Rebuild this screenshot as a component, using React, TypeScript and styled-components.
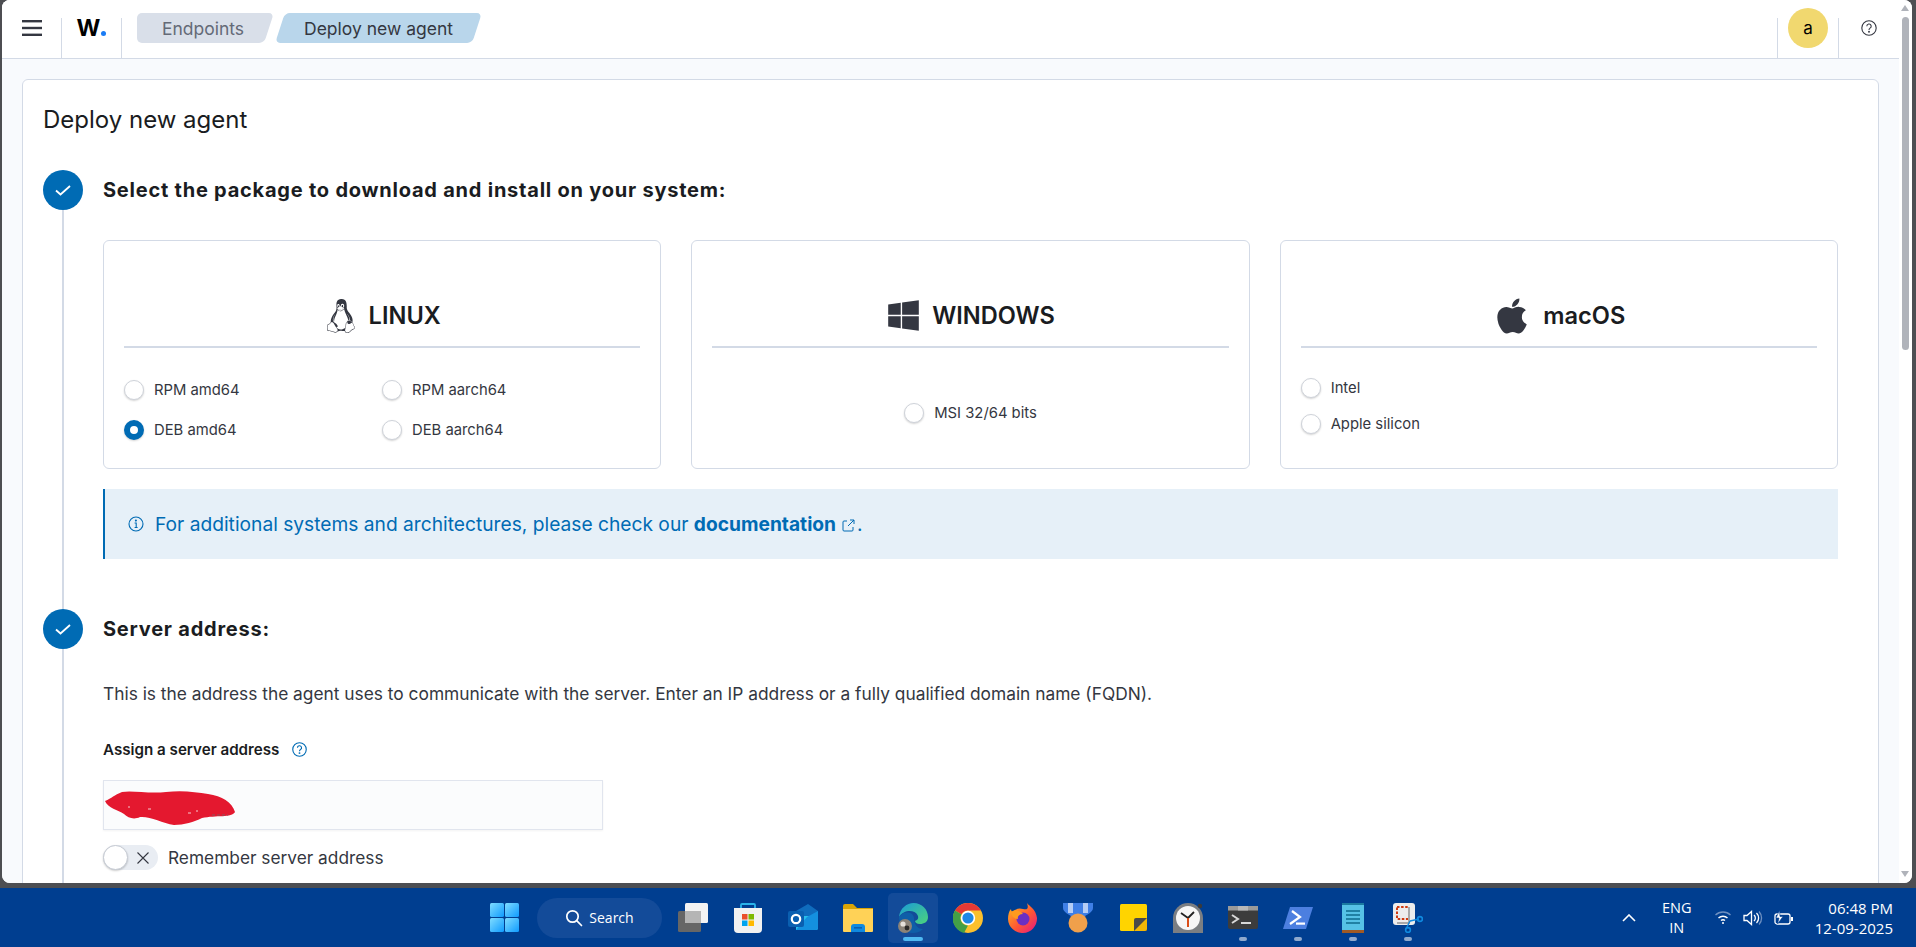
import React from 'react';
import styled, { createGlobalStyle } from 'styled-components';
import { FaWindows, FaApple } from 'react-icons/fa';
import { SiLinux } from 'react-icons/si';

const GlobalStyle = createGlobalStyle`
  html, body {
    margin: 0;
    height: 100%;
    overflow: hidden;
    background: #4d4e52;
  }
  * { box-sizing: border-box; }
`;

const Screen = styled.div`
  width: 1916px;
  height: 947px;
  display: flex;
  flex-direction: column;
  font-family: Inter, "Liberation Sans", sans-serif;
  color: #343741;
  background: #4d4e52;
  overflow: hidden;
`;

const Desktop = styled.div`
  height: 888px;
  padding: 0 4px 5px 2px;
`;

const BrowserWindow = styled.div`
  height: 883px;
  display: flex;
  background: #fff;
  border-radius: 8px;
  overflow: hidden;
`;

const Viewport = styled.div`
  flex: 1;
  min-width: 0;
  display: flex;
  flex-direction: column;
  background: #f8fafd;
`;

const ScrollTrack = styled.div`
  width: 13px;
  display: flex;
  flex-direction: column;
  align-items: flex-start;
  background: #fff;
  padding: 5px 0 6px 2px;
`;

const ScrollArrow = styled.div<{ $down?: boolean }>`
  width: 0;
  height: 0;
  margin-top: ${(p) => (p.$down ? 'auto' : '0')};
  border-left: 4.5px solid transparent;
  border-right: 4.5px solid transparent;
  border-bottom: ${(p) => (p.$down ? 'none' : '6px solid #b0b3ba')};
  border-top: ${(p) => (p.$down ? '6px solid #b0b3ba' : 'none')};
`;

const ScrollThumb = styled.div`
  width: 7px;
  height: 333px;
  margin: 6px 0 0 1px;
  border-radius: 4px;
  background: #b0b3ba;
`;

const Header = styled.header`
  height: 59px;
  flex: none;
  display: flex;
  background: #fff;
  border-bottom: 1px solid #d3dae6;
`;

const HeaderCell = styled.div<{ $width: number; $divider?: boolean }>`
  width: ${(p) => p.$width}px;
  height: 40px;
  margin-top: 18px;
  flex: none;
  display: flex;
  justify-content: center;
  border-right: ${(p) => (p.$divider ? '1px solid #d3dae6' : 'none')};
`;

const Hamburger = styled.svg`
  margin-top: 2px;
`;

const LogoMark = styled.div`
  margin-top: -5px;
  font-size: 23px;
  line-height: 30px;
  font-weight: 700;
  color: #000;
`;

const LogoDot = styled.span`
  display: inline-block;
  width: 5px;
  height: 5px;
  margin-left: 1px;
  border-radius: 50%;
  background: #1a7cf5;
`;

const Crumbs = styled.nav`
  display: flex;
  gap: 11px;
  margin: 13px 0 0 15px;
  height: 30px;
`;

const Crumb = styled.div<{ $first?: boolean; $width: number }>`
  position: relative;
  width: ${(p) => p.$width}px;
  height: 30px;
  display: flex;
  align-items: center;
  justify-content: center;
  font-size: 17.5px;
  color: ${(p) => (p.$first ? '#646a77' : '#343741')};
  &::before {
    content: '';
    position: absolute;
    top: 0;
    bottom: 0;
    left: ${(p) => (p.$first ? '10px' : '0')};
    right: 0;
    border-radius: 5px;
    transform: skewX(-18deg);
    background: ${(p) => (p.$first ? '#d9dfe9' : '#b9d6eb')};
  }
  &::after {
    content: '';
    display: ${(p) => (p.$first ? 'block' : 'none')};
    position: absolute;
    top: 0;
    bottom: 0;
    left: 0;
    width: 60px;
    border-radius: 5px;
    background: #d9dfe9;
  }
`;

const CrumbLabel = styled.span`
  position: relative;
  z-index: 1;
`;

const HeaderSpacer = styled.div`
  flex: 1;
`;

const Avatar = styled.div`
  width: 40px;
  height: 40px;
  margin-top: -10px;
  border-radius: 50%;
  background: #f1d86f;
  color: #000;
  font-size: 17px;
  display: flex;
  align-items: center;
  justify-content: center;
`;

const HelpIcon = styled.svg`
  margin-top: 2px;
`;

const Main = styled.main`
  flex: 1;
  min-height: 0;
  overflow: hidden;
  padding: 20px 20px 0;
`;

const Panel = styled.section`
  background: #fff;
  border: 1px solid #d3dae6;
  border-radius: 6px;
  padding: 22px 40px 0 20px;
  min-height: 900px;
`;

const PageTitle = styled.h1`
  margin: 0 0 32px;
  font-size: 24px;
  line-height: 36px;
  font-weight: 400;
  color: #1a1c21;
`;

const StepHead = styled.div`
  display: flex;
  align-items: center;
  gap: 20px;
  height: 40px;
`;

const StepCircle = styled.div`
  width: 40px;
  height: 40px;
  border-radius: 50%;
  background: #006bb4;
  display: flex;
  align-items: center;
  justify-content: center;
  flex: none;
`;

const StepTitle = styled.h2`
  margin: 0;
  font-size: 20px;
  line-height: 28px;
  font-weight: 700;
  letter-spacing: 0.77px;
  color: #1a1c21;
`;

const StepBody = styled.div<{ $top: number; $bottom: number }>`
  margin-left: 19px;
  padding: ${(p) => p.$top}px 0 ${(p) => p.$bottom}px 39px;
  border-left: 2px solid #d3dae6;
`;

const CardGrid = styled.div`
  display: grid;
  grid-template-columns: repeat(3, 1fr);
  gap: 30px;
`;

const Card = styled.div`
  height: 229px;
  padding: 0 20px;
  background: #fff;
  border: 1px solid #d3dae6;
  border-radius: 6px;
`;

const CardHead = styled.div`
  height: 107px;
  display: flex;
  align-items: center;
  justify-content: center;
  gap: 11px;
  padding-top: 44px;
  border-bottom: 2px solid #d3dae6;
  font-size: 23.6px;
  font-weight: 600;
  color: #1a1c21;
  svg {
    color: #343741;
    flex: none;
  }
`;

const Options = styled.div<{ $top: number; $gap: number; $columns?: string; $center?: boolean }>`
  display: grid;
  grid-template-columns: ${(p) => p.$columns ?? '1fr'};
  row-gap: ${(p) => p.$gap}px;
  padding-top: ${(p) => p.$top}px;
  justify-items: ${(p) => (p.$center ? 'center' : 'start')};
`;

const Option = styled.label`
  display: flex;
  align-items: center;
  gap: 10px;
  height: 20px;
  font-size: 14.8px;
  color: #343741;
`;

const Radio = styled.span<{ $checked?: boolean }>`
  width: 20px;
  height: 20px;
  border-radius: 50%;
  flex: none;
  background: #fff;
  border: ${(p) => (p.$checked ? '6px solid #006bb4' : '1px solid #cfd3da')};
  box-shadow: 0 1px 2px rgba(0, 0, 0, 0.18);
`;

const Callout = styled.div`
  margin-top: 20px;
  height: 70px;
  display: flex;
  align-items: center;
  gap: 11px;
  padding-left: 23px;
  border-left: 2px solid #006bb4;
  background: #e6f0f8;
  color: #006bb4;
  font-size: 19.2px;
`;

const DocLink = styled.a`
  font-weight: 700;
  color: #006bb4;
`;

const ExternalIcon = styled.svg`
  margin: 0 2px 0 6px;
  vertical-align: -1px;
`;

const Paragraph = styled.p`
  margin: 0 0 33px;
  font-size: 17.33px;
  line-height: 24px;
  color: #343741;
`;

const FieldLabel = styled.div`
  display: flex;
  align-items: center;
  gap: 13px;
  height: 20px;
  margin-bottom: 21px;
  font-size: 15.15px;
  font-weight: 600;
  color: #1a1c21;
`;

const AddressInput = styled.div`
  position: relative;
  width: 500px;
  height: 50px;
  background: #fbfcfd;
  border: 1px solid #e1e5ee;
  box-shadow: 0 1px 2px rgba(0, 0, 0, 0.05);
`;

const Scribble = styled.svg`
  position: absolute;
  left: 0;
  top: 9px;
`;

const ToggleRow = styled.div`
  display: flex;
  align-items: center;
  gap: 10px;
  margin-top: 15px;
  font-size: 17.3px;
  color: #343741;
`;

const Toggle = styled.div`
  width: 55px;
  height: 25px;
  display: flex;
  align-items: center;
  justify-content: space-between;
  padding-right: 8px;
  border-radius: 13px;
  background: #e9edf3;
`;

const ToggleKnob = styled.span`
  width: 25px;
  height: 25px;
  border-radius: 50%;
  background: #fff;
  border: 1px solid #c5cad3;
  box-shadow: 0 1px 2px rgba(0, 0, 0, 0.2);
`;

const Taskbar = styled.footer`
  height: 59px;
  flex: none;
  position: relative;
  display: flex;
  align-items: center;
  justify-content: flex-end;
  background: #003e90;
  color: #fff;
  font-family: "Open Sans", "Noto Sans", sans-serif;
`;

const TaskbarCenter = styled.div`
  position: absolute;
  left: 489px;
  top: 0;
  height: 59px;
  display: flex;
  align-items: center;
`;

const TaskSlot = styled.div<{ $active?: boolean; $open?: boolean }>`
  position: relative;
  width: 50px;
  height: 50px;
  margin-right: 5px;
  display: flex;
  align-items: center;
  justify-content: center;
  border-radius: 5px;
  background: ${(p) => (p.$active ? '#134b99' : 'transparent')};
  &::after {
    content: '';
    display: ${(p) => (p.$open || p.$active ? 'block' : 'none')};
    position: absolute;
    left: 50%;
    bottom: 2px;
    width: ${(p) => (p.$active ? '20px' : '8px')};
    height: 4px;
    margin-left: ${(p) => (p.$active ? '-10px' : '-4px')};
    border-radius: 2px;
    background: ${(p) => (p.$active ? '#4fb9f2' : '#8fa9cd')};
  }
`;

const SearchPill = styled.div`
  width: 125px;
  height: 40px;
  margin: 0 6px 0 18px;
  display: flex;
  align-items: center;
  justify-content: center;
  gap: 6px;
  border-radius: 20px;
  background: #134b99;
  font-size: 14px;
`;

const StartSlot = styled.div`
  width: 30px;
  display: flex;
  justify-content: center;
`;

const Tray = styled.div`
  display: flex;
  align-items: center;
  padding-right: 23px;
`;

const TrayLang = styled.div`
  width: 40px;
  margin: 0 17px 0 21px;
  text-align: center;
  font-size: 14.5px;
  line-height: 20px;
`;

const TrayIcons = styled.div`
  display: flex;
  align-items: center;
  gap: 11px;
  margin-right: 21px;
`;

const Clock = styled.div`
  text-align: right;
  font-size: 15px;
  line-height: 20px;
`;

const StartIcon = () => (
  <svg width="29" height="29" viewBox="0 0 29 29">
    <defs>
      <linearGradient id="startFill" x1="0" y1="0" x2="1" y2="1">
        <stop offset="0" stopColor="#7fdcff" />
        <stop offset="1" stopColor="#0f9bff" />
      </linearGradient>
    </defs>
    <rect x="0" y="0" width="14" height="14" rx="1.5" fill="url(#startFill)" />
    <rect x="15" y="0" width="14" height="14" rx="1.5" fill="url(#startFill)" />
    <rect x="0" y="15" width="14" height="14" rx="1.5" fill="url(#startFill)" />
    <rect x="15" y="15" width="14" height="14" rx="1.5" fill="url(#startFill)" />
  </svg>
);

const SearchIcon = () => (
  <svg width="18" height="18" viewBox="0 0 18 18" fill="none" stroke="#fff" strokeWidth="1.7">
    <circle cx="7.5" cy="7.5" r="5.7" />
    <path d="M11.7 11.7 L16.5 16.5" strokeLinecap="round" />
  </svg>
);

const TaskViewIcon = () => (
  <svg width="30" height="30" viewBox="0 0 30 30">
    <rect x="0" y="8" width="23" height="21" rx="1.5" fill="#666" />
    <rect x="7" y="0" width="23" height="20" rx="1.5" fill="#f3f3f3" />
    <rect x="7" y="8" width="16" height="12" fill="#b5b5b5" />
  </svg>
);

const StoreIcon = () => (
  <svg width="30" height="30" viewBox="0 0 30 30">
    <path d="M8 6 V2 a1 1 0 0 1 1-1 h12 a1 1 0 0 1 1 1 v4" fill="none" stroke="#2ab4ea" strokeWidth="1.8" />
    <path d="M1 5 h28 v21 a4 4 0 0 1-4 4 h-20 a4 4 0 0 1-4-4 z" fill="#f1f1f1" />
    <rect x="9" y="11" width="5.5" height="5.5" fill="#ea4f2a" />
    <rect x="15.5" y="11" width="5.5" height="5.5" fill="#7fb900" />
    <rect x="9" y="17.5" width="5.5" height="5.5" fill="#00a3ee" />
    <rect x="15.5" y="17.5" width="5.5" height="5.5" fill="#ffb900" />
  </svg>
);

const OutlookIcon = () => (
  <svg width="30" height="30" viewBox="0 0 30 30">
    <path d="M8 8 L20 1 L30 8 V13 H8 z" fill="#0f6cbd" />
    <path d="M8 13 H30 V25 a2 2 0 0 1-2 2 H8 z" fill="#27c0ec" />
    <path d="M8 27 L19 14 L30 8 V25 a2 2 0 0 1-2 2 z" fill="#1490df" />
    <rect x="0" y="8" width="16" height="16" rx="2" fill="#0a5fb0" />
    <circle cx="8" cy="16" r="4.2" fill="none" stroke="#fff" strokeWidth="2.2" />
  </svg>
);

const ExplorerIcon = () => (
  <svg width="30" height="28" viewBox="0 0 30 28">
    <path d="M0 2 a2 2 0 0 1 2-2 h8 l4 4 h16 v8 H0 z" fill="#d9a406" />
    <path d="M0 5 h30 v22 a1 1 0 0 1-1 1 H1 a1 1 0 0 1-1-1 z" fill="#ffd257" />
    <path d="M8 28 v-5 a3 3 0 0 1 3-3 h8 a3 3 0 0 1 3 3 v5 z" fill="#0f8ae0" />
    <rect x="11" y="23" width="8" height="1.6" fill="#0a5fb0" />
  </svg>
);

const EdgeIcon = () => (
  <svg width="30" height="30" viewBox="0 0 30 30">
    <defs>
      <linearGradient id="edgeTop" x1="0" y1="0" x2="1" y2="1">
        <stop offset="0" stopColor="#1a9bd8" />
        <stop offset="1" stopColor="#4cd37c" />
      </linearGradient>
    </defs>
    <path d="M1 14 C2 5 9 0 15.5 0 C24 0 30 6.5 30 14 C30 19 26 21 22 21 C18.5 21 17 19.5 17 18 C20 17 21 15 19.5 12 C17 7 6 6 1 14 z" fill="url(#edgeTop)" />
    <path d="M1 14 C5 8 15 8 16 15 C16 21 19 26 25 26 C22 29 18 30 15 30 C7 30 1 23 1 14 z" fill="#0f5ea8" />
    <circle cx="7" cy="23" r="7" fill="#8b8378" />
    <circle cx="5" cy="21" r="2.6" fill="#e6e1da" />
    <circle cx="9" cy="25" r="2.4" fill="#2c2a28" />
  </svg>
);

const ChromeIcon = () => (
  <svg width="30" height="30" viewBox="0 0 30 30">
    <circle cx="15" cy="15" r="15" fill="#fbc02d" />
    <path d="M15 0 A15 15 0 0 1 28 7.5 H15 A7.5 7.5 0 0 0 8.5 11.2 L2 7.5 A15 15 0 0 1 15 0 z" fill="#e53935" />
    <path d="M2 7.5 L8.5 11.2 A7.5 7.5 0 0 0 15 22.5 L11 30 A15 15 0 0 1 2 7.5 z" fill="#43a047" />
    <circle cx="15" cy="15" r="7.2" fill="#fff" />
    <circle cx="15" cy="15" r="5.6" fill="#1e88e5" />
  </svg>
);

const FirefoxIcon = () => (
  <svg width="30" height="30" viewBox="0 0 30 30">
    <defs>
      <linearGradient id="foxFill" x1="0" y1="0" x2="1" y2="1">
        <stop offset="0" stopColor="#ffbd1f" />
        <stop offset="0.55" stopColor="#ff5634" />
        <stop offset="1" stopColor="#e31587" />
      </linearGradient>
    </defs>
    <path d="M19 0 C21 3 28 6 29 15 A14.5 14.5 0 0 1 0 16 C0 12 1 8 3 6 C3 8 4 9 5 9 C8 5 12 5 15 6 C19 7 21 6 19 0 z" fill="url(#foxFill)" />
    <circle cx="15" cy="16" r="6.5" fill="#6a2fc2" />
    <path d="M3 9 C8 5 13 9 15 11 C11 11 9 14 10 16 C6 16 3 13 3 9 z" fill="#ff9a1f" />
  </svg>
);

const MedalIcon = () => (
  <svg width="30" height="30" viewBox="0 0 30 30">
    <path d="M0 0 H30 V5 C30 9 24 12 20 14 H10 C6 12 0 9 0 5 z" fill="#3f7fe6" />
    <rect x="5" y="0" width="5" height="10" fill="#b5cdf5" />
    <rect x="20" y="0" width="5" height="10" fill="#b5cdf5" />
    <circle cx="15" cy="20" r="9.5" fill="#f0a04b" />
  </svg>
);

const StickyIcon = () => (
  <svg width="27" height="27" viewBox="0 0 27 27">
    <rect x="0" y="0" width="27" height="27" rx="1.5" fill="#ffd400" />
    <path d="M14 27 V16 a2 2 0 0 1 2-2 H27 V27 z" fill="#4a4a48" />
    <path d="M14 27 L27 14 V25 a2 2 0 0 1-2 2 z" fill="#f2b705" />
  </svg>
);

const ClockIcon = () => (
  <svg width="30" height="30" viewBox="0 0 30 30">
    <path d="M0 15 A15 15 0 0 1 30 15 V30 H0 z" fill="#7b7e82" />
    <circle cx="15" cy="15" r="12" fill="#f6f6f6" />
    <path d="M15 15 L8 10 M15 15 L21 9" stroke="#222" strokeWidth="1.8" />
    <path d="M15 15 V24" stroke="#d83b01" strokeWidth="1.8" />
    <circle cx="27" cy="3" r="2.2" fill="#3a3a3a" />
  </svg>
);

const TerminalIcon = () => (
  <svg width="30" height="23" viewBox="0 0 30 23">
    <rect x="0" y="0" width="30" height="23" rx="2" fill="#3c3c3c" />
    <rect x="0" y="0" width="30" height="4.5" fill="#9a9a9a" />
    <rect x="10" y="0" width="10" height="4.5" fill="#b8b8b8" />
    <path d="M4 9 L10 13 L4 17" fill="none" stroke="#d8d8d8" strokeWidth="2" />
    <rect x="13" y="16" width="10" height="2" fill="#d8d8d8" />
  </svg>
);

const PowerShellIcon = () => (
  <svg width="30" height="22" viewBox="0 0 30 22">
    <path d="M7 0 H30 L23 22 H0 z" fill="#4c7fe0" />
    <path d="M9 4 L17 10 L7 17" fill="none" stroke="#fff" strokeWidth="2.2" />
    <rect x="13" y="15.5" width="9" height="2.2" fill="#fff" />
  </svg>
);

const NotepadIcon = () => (
  <svg width="22" height="30" viewBox="0 0 22 30">
    <rect x="0" y="1" width="22" height="29" rx="1" fill="#56c2e6" />
    <rect x="0" y="27" width="22" height="3" fill="#a05a24" />
    <rect x="0" y="0" width="22" height="2" fill="#1a7aa0" />
    <path d="M4 8 H18 M4 12 H18 M4 16 H18 M4 20 H18" stroke="#0f6c8f" strokeWidth="1.6" />
  </svg>
);

const SnipIcon = () => (
  <svg width="30" height="30" viewBox="0 0 30 30">
    <rect x="0" y="0" width="22" height="22" rx="3" fill="#ededed" />
    <rect x="4" y="4" width="12" height="12" fill="none" stroke="#cf3a12" strokeWidth="2" strokeDasharray="2.5 1.6" />
    <path d="M16 4 V20 H4" fill="none" stroke="#a9a9a9" strokeWidth="2" />
    <path d="M17 18 L13 26 M17 18 L26 16" stroke="#0f8ae0" strokeWidth="1.4" />
    <circle cx="15" cy="27" r="2.4" fill="none" stroke="#0f8ae0" strokeWidth="1.6" />
    <circle cx="27" cy="16" r="2.4" fill="none" stroke="#0f8ae0" strokeWidth="1.6" />
  </svg>
);

const CheckMark = () => (
  <svg width="16" height="16" viewBox="0 0 16 16" fill="none" stroke="#fff" strokeWidth="1.8">
    <path d="M1 8.5 L5.5 12.5 L15 4" />
  </svg>
);

const taskApps = [
  { key: 'view', icon: <TaskViewIcon /> },
  { key: 'store', icon: <StoreIcon /> },
  { key: 'outlook', icon: <OutlookIcon /> },
  { key: 'explorer', icon: <ExplorerIcon /> },
  { key: 'edge', icon: <EdgeIcon />, active: true },
  { key: 'chrome', icon: <ChromeIcon /> },
  { key: 'firefox', icon: <FirefoxIcon /> },
  { key: 'medal', icon: <MedalIcon /> },
  { key: 'sticky', icon: <StickyIcon /> },
  { key: 'clock', icon: <ClockIcon /> },
  { key: 'terminal', icon: <TerminalIcon />, open: true },
  { key: 'powershell', icon: <PowerShellIcon />, open: true },
  { key: 'notepad', icon: <NotepadIcon />, open: true },
  { key: 'snip', icon: <SnipIcon />, open: true },
];

const App = () => {
  return (
    <Screen>
      <GlobalStyle />
      <Desktop>
        <BrowserWindow>
          <Viewport>
            <Header>
              <HeaderCell $width={60} $divider>
                <Hamburger width="20" height="16" viewBox="0 0 20 16" fill="#343741">
                  <rect x="0" y="0" width="20" height="2.4" />
                  <rect x="0" y="6.8" width="20" height="2.4" />
                  <rect x="0" y="13.6" width="20" height="2.4" />
                </Hamburger>
              </HeaderCell>
              <HeaderCell $width={60} $divider>
                <LogoMark>
                  W<LogoDot />
                </LogoMark>
              </HeaderCell>
              <Crumbs>
                <Crumb $first $width={132}>
                  <CrumbLabel>Endpoints</CrumbLabel>
                </Crumb>
                <Crumb $width={197}>
                  <CrumbLabel>Deploy new agent</CrumbLabel>
                </Crumb>
              </Crumbs>
              <HeaderSpacer />
              <HeaderCell $width={1} $divider />
              <HeaderCell $width={61} $divider>
                <Avatar>a</Avatar>
              </HeaderCell>
              <HeaderCell $width={60}>
                <HelpIcon width="16" height="16" viewBox="0 0 16 16" fill="none" stroke="#343741" strokeWidth="1.1">
                  <circle cx="8" cy="8" r="7.2" />
                  <path d="M5.8 6.2 a2.2 2.2 0 1 1 3.3 1.9 c-.8.5-1.1.9-1.1 1.8" />
                  <circle cx="8" cy="11.8" r=".4" />
                </HelpIcon>
              </HeaderCell>
            </Header>
            <Main>
              <Panel>
                <PageTitle>Deploy new agent</PageTitle>

                <StepHead>
                  <StepCircle>
                    <CheckMark />
                  </StepCircle>
                  <StepTitle>Select the package to download and install on your system:</StepTitle>
                </StepHead>
                <StepBody $top={30} $bottom={50}>
                  <CardGrid>
                    <Card>
                      <CardHead>
                        <SiLinux size={34} />
                        LINUX
                      </CardHead>
                      <Options $top={32} $gap={20} $columns="258px 1fr">
                        <Option><Radio />RPM amd64</Option>
                        <Option><Radio />RPM aarch64</Option>
                        <Option><Radio $checked />DEB amd64</Option>
                        <Option><Radio />DEB aarch64</Option>
                      </Options>
                    </Card>
                    <Card>
                      <CardHead>
                        <FaWindows size={35} />
                        WINDOWS
                      </CardHead>
                      <Options $top={55} $gap={20} $center>
                        <Option><Radio />MSI 32/64 bits</Option>
                      </Options>
                    </Card>
                    <Card>
                      <CardHead>
                        <FaApple size={40} />
                        macOS
                      </CardHead>
                      <Options $top={30} $gap={16}>
                        <Option><Radio />Intel</Option>
                        <Option><Radio />Apple silicon</Option>
                      </Options>
                    </Card>
                  </CardGrid>
                  <Callout>
                    <svg width="16" height="16" viewBox="0 0 16 16" fill="none" stroke="#006bb4" strokeWidth="1.1">
                      <circle cx="8" cy="8" r="7" />
                      <path d="M6.6 7 H8.2 V11.5 M6.6 11.5 H9.6" />
                      <circle cx="7.9" cy="4.6" r=".5" fill="#006bb4" />
                    </svg>
                    <span>
                      For additional systems and architectures, please check our{' '}
                      <DocLink>documentation</DocLink>
                      <ExternalIcon width="13" height="13" viewBox="0 0 13 13" fill="none" stroke="#006bb4" strokeWidth="1">
                        <path d="M5 2 H2 a1 1 0 0 0-1 1 V11 a1 1 0 0 0 1 1 H10 a1 1 0 0 0 1-1 V8" />
                        <path d="M6 7 L12 1 M8 1 H12 V5" />
                      </ExternalIcon>
                      .
                    </span>
                  </Callout>
                </StepBody>

                <StepHead>
                  <StepCircle>
                    <CheckMark />
                  </StepCircle>
                  <StepTitle>Server address:</StepTitle>
                </StepHead>
                <StepBody $top={33} $bottom={60}>
                  <Paragraph>
                    This is the address the agent uses to communicate with the server. Enter an IP address or a fully qualified domain name (FQDN).
                  </Paragraph>
                  <FieldLabel>
                    Assign a server address
                    <svg width="15" height="15" viewBox="0 0 16 16" fill="none" stroke="#006bb4" strokeWidth="1.2">
                      <circle cx="8" cy="8" r="7.2" />
                      <path d="M5.8 6.2 a2.2 2.2 0 1 1 3.3 1.9 c-.8.5-1.1.9-1.1 1.8" />
                      <circle cx="8" cy="11.8" r=".4" />
                    </svg>
                  </FieldLabel>
                  <AddressInput>
                    <Scribble width="132" height="36" viewBox="0 0 132 36">
                      <path
                        d="M1 11 C8 8 10 5 18 2 C28 0 45 4 62 2 C78 0 92 2 104 4 C118 6 128 12 131 22 C128 28 112 25 98 28 C90 32 80 35 70 35 C58 33 46 26 36 27 C30 30 24 28 20 24 C14 20 4 18 1 11 z"
                        fill="#e4182f"
                      />
                      <path d="M84 23 h3 M92 21 h2 M24 17 h2 M44 19 h3" stroke="#f6c9cf" strokeWidth="1" />
                      <path d="M108 25 h16" stroke="#8a5560" strokeWidth="1.2" strokeDasharray="3 2" />
                    </Scribble>
                  </AddressInput>
                  <ToggleRow>
                    <Toggle>
                      <ToggleKnob />
                      <svg width="14" height="14" viewBox="0 0 14 14" stroke="#343741" strokeWidth="1.1">
                        <path d="M1.5 1.5 L12.5 12.5 M12.5 1.5 L1.5 12.5" />
                      </svg>
                    </Toggle>
                    Remember server address
                  </ToggleRow>
                </StepBody>
              </Panel>
            </Main>
          </Viewport>
          <ScrollTrack>
            <ScrollArrow />
            <ScrollThumb />
            <ScrollArrow $down />
          </ScrollTrack>
        </BrowserWindow>
      </Desktop>
      <Taskbar>
        <TaskbarCenter>
          <StartSlot>
            <StartIcon />
          </StartSlot>
          <SearchPill>
            <SearchIcon />
            Search
          </SearchPill>
          {taskApps.map((app) => (
            <TaskSlot key={app.key} $active={app.active} $open={app.open}>
              {app.icon}
            </TaskSlot>
          ))}
        </TaskbarCenter>
        <Tray>
          <svg width="14" height="8" viewBox="0 0 14 8" fill="none" stroke="#fff" strokeWidth="1.6">
            <path d="M1 7 L7 1 L13 7" />
          </svg>
          <TrayLang>
            ENG
            <br />
            IN
          </TrayLang>
          <TrayIcons>
            <svg width="18" height="15" viewBox="0 0 18 15" fill="none" stroke="#fff" strokeWidth="1.4">
              <path d="M4.5 8 A6.5 6.5 0 0 1 13.5 8" />
              <path d="M7 10.6 A3 3 0 0 1 11 10.6" />
              <path d="M1.5 5 A11 11 0 0 1 16.5 5" stroke="#6d8fc0" />
              <circle cx="9" cy="13" r="1" fill="#fff" stroke="none" />
            </svg>
            <svg width="20" height="16" viewBox="0 0 20 16" fill="none" stroke="#fff" strokeWidth="1.3">
              <path d="M1 5.5 H4 L8.5 1.5 V14.5 L4 10.5 H1 z" />
              <path d="M11 5 A4 4 0 0 1 11 11" />
              <path d="M13.5 3 A7 7 0 0 1 13.5 13" />
              <path d="M16 1.5 A9.5 9.5 0 0 1 16 14.5" stroke="#6d8fc0" />
            </svg>
            <svg width="20" height="16" viewBox="0 0 20 16" fill="none" stroke="#fff" strokeWidth="1.3">
              <rect x="1" y="4" width="15" height="10" rx="2" />
              <rect x="17" y="7" width="2" height="4" fill="#fff" stroke="none" />
              <path d="M5.5 0.5 L2 8 H5 L3.5 14 L9 6.5 H6 z" fill="#fff" stroke="#003e90" strokeWidth=".6" />
            </svg>
          </TrayIcons>
          <Clock>
            06:48 PM
            <br />
            12-09-2025
          </Clock>
        </Tray>
      </Taskbar>
    </Screen>
  );
};

export default App;
